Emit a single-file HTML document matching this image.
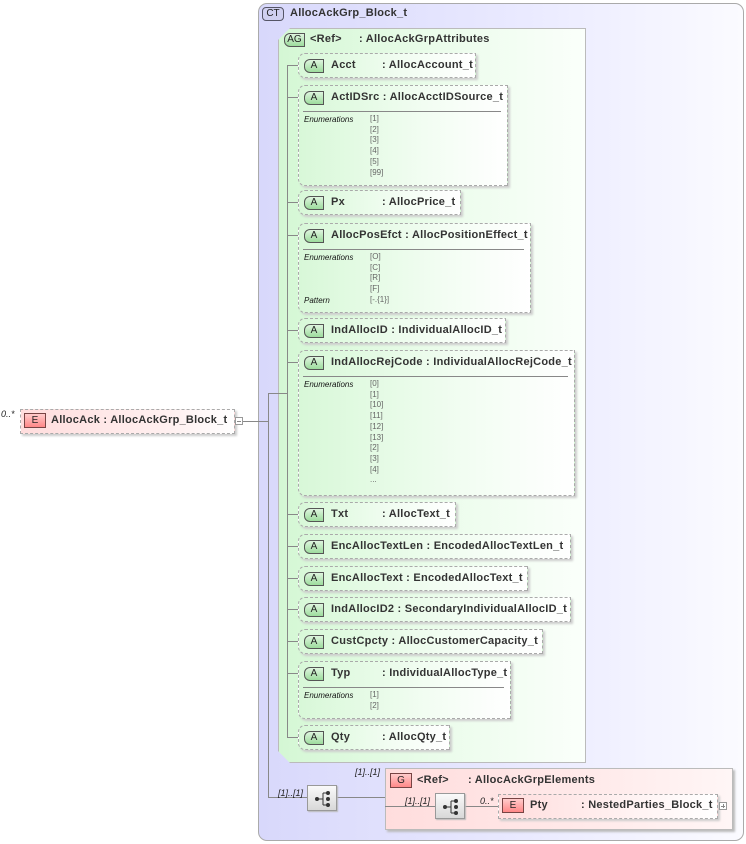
<!DOCTYPE html>
<html><head><meta charset="utf-8">
<style>
*{margin:0;padding:0;box-sizing:border-box}
body{width:746px;height:844px;background:#fff;position:relative;overflow:hidden;font-family:"Liberation Sans",Arial,sans-serif;font-size:11px;color:#222}
.a{position:absolute}
.ct{left:258px;top:3px;width:486px;height:838px;border:1px solid #aaa;border-radius:9px;background:linear-gradient(90deg,#d8d8fb 0%,#eaeaff 55%,#fbfbff 100%)}
.ag{left:278px;top:28px;width:308px;height:735px;border:1px solid #bbb;background:linear-gradient(90deg,#d4f7d4 0%,#eafcea 50%,#fbfffb 100%);box-shadow:2px 2px 2px #bbb;clip-path:polygon(12px 0,100% 0,100% 100%,12px 100%,0 calc(100% - 12px),0 12px)}
.box{position:absolute;border:1px dashed #aaa;background:linear-gradient(90deg,#d8f8d8 0%,#f2fdf2 60%,#fff 100%);box-shadow:2px 2px 2px #ccc;border-radius:7px 0 0 7px}
.b{font-weight:bold;font-size:11px;white-space:nowrap;letter-spacing:0.25px;color:#333}
.badge{position:absolute;left:5px;top:5px;width:20px;height:14px;border:1px solid #555;border-radius:6px 0 0 6px;background:linear-gradient(#dff5df,#9ddc9d);font-size:10px;text-align:center;line-height:12px;color:#222}
.hd{position:absolute;left:32px;top:5px}
.sep{position:absolute;left:4px;right:6px;height:1px;background:#888}
.en{position:absolute;font-size:8px;font-style:italic;color:#111}
.v{position:absolute;font-size:8px;color:#666;line-height:10.7px}
.ln{position:absolute;background:#888}
.i{font-style:italic;font-size:9px;position:absolute;white-space:nowrap}
.seq{position:absolute;width:30px;height:26px;border:1px solid #999;background:linear-gradient(#fafafa,#d8d8d8);box-shadow:1px 1px 1px #bbb}
</style></head><body>

<div class="a ct"></div>
<div class="a" style="left:262px;top:7px;width:22px;height:14px;border:1px solid #556;border-radius:4px;background:#d0d0f0;font-size:10px;text-align:center;line-height:12px">CT</div>
<div class="a b" style="left:290px;top:7px">AllocAckGrp_Block_t</div>

<div class="a ag"></div>
<div class="a" style="left:284px;top:33px;width:21px;height:14px;border:1px solid #555;border-radius:6px 0 0 6px;background:linear-gradient(#dff5df,#9ddc9d);font-size:10px;text-align:center;line-height:12px">AG</div>
<div class="a b" style="left:310px;top:33px">&lt;Ref&gt;</div>
<div class="a b" style="left:359px;top:33px">: AllocAckGrpAttributes</div>

<div class="ln" style="left:287px;top:65px;width:1px;height:673px"></div>
<div class="ln" style="left:268px;top:393px;width:20px;height:1px"></div>
<div class="ln" style="left:268px;top:393px;width:1px;height:405px"></div>
<div class="ln" style="left:240px;top:421px;width:29px;height:1px"></div>
<div class="ln" style="left:268px;top:797px;width:40px;height:1px"></div>
<div class="ln" style="left:337px;top:797px;width:48px;height:1px"></div>

<div class="box" style="left:298px;top:53px;width:178px;height:25px"><div class="badge">A</div><div class="hd b">Acct</div><div class="hd b" style="left:83px">: AllocAccount_t</div></div>
<div class="ln" style="left:287px;top:65px;width:11px;height:1px"></div>

<div class="box" style="left:298px;top:85px;width:210px;height:101px"><div class="badge">A</div><div class="hd b">ActIDSrc : AllocAcctIDSource_t</div>
<div class="sep" style="top:25px"></div><div class="en" style="left:5px;top:29px">Enumerations</div><div class="v" style="left:71px;top:28px">[1]<br>[2]<br>[3]<br>[4]<br>[5]<br>[99]</div></div>
<div class="ln" style="left:287px;top:97px;width:11px;height:1px"></div>

<div class="box" style="left:298px;top:190px;width:163px;height:25px"><div class="badge">A</div><div class="hd b">Px</div><div class="hd b" style="left:83px">: AllocPrice_t</div></div>
<div class="ln" style="left:287px;top:202px;width:11px;height:1px"></div>

<div class="box" style="left:298px;top:223px;width:233px;height:90px"><div class="badge">A</div><div class="hd b">AllocPosEfct : AllocPositionEffect_t</div>
<div class="sep" style="top:25px"></div><div class="en" style="left:5px;top:29px">Enumerations</div><div class="v" style="left:71px;top:28px">[O]<br>[C]<br>[R]<br>[F]<br>[-.{1}]</div><div class="en" style="left:5px;top:72px">Pattern</div></div>
<div class="ln" style="left:287px;top:235px;width:11px;height:1px"></div>

<div class="box" style="left:298px;top:318px;width:208px;height:25px"><div class="badge">A</div><div class="hd b">IndAllocID : IndividualAllocID_t</div></div>
<div class="ln" style="left:287px;top:330px;width:11px;height:1px"></div>

<div class="box" style="left:298px;top:350px;width:277px;height:146px"><div class="badge">A</div><div class="hd b">IndAllocRejCode : IndividualAllocRejCode_t</div>
<div class="sep" style="top:25px"></div><div class="en" style="left:5px;top:29px">Enumerations</div><div class="v" style="left:71px;top:28px">[0]<br>[1]<br>[10]<br>[11]<br>[12]<br>[13]<br>[2]<br>[3]<br>[4]<br>...</div></div>
<div class="ln" style="left:287px;top:362px;width:11px;height:1px"></div>

<div class="box" style="left:298px;top:502px;width:158px;height:25px"><div class="badge">A</div><div class="hd b">Txt</div><div class="hd b" style="left:83px">: AllocText_t</div></div>
<div class="ln" style="left:287px;top:514px;width:11px;height:1px"></div>

<div class="box" style="left:298px;top:534px;width:273px;height:25px"><div class="badge">A</div><div class="hd b">EncAllocTextLen : EncodedAllocTextLen_t</div></div>
<div class="ln" style="left:287px;top:546px;width:11px;height:1px"></div>

<div class="box" style="left:298px;top:566px;width:230px;height:25px"><div class="badge">A</div><div class="hd b">EncAllocText : EncodedAllocText_t</div></div>
<div class="ln" style="left:287px;top:578px;width:11px;height:1px"></div>

<div class="box" style="left:298px;top:597px;width:273px;height:25px"><div class="badge">A</div><div class="hd b">IndAllocID2 : SecondaryIndividualAllocID_t</div></div>
<div class="ln" style="left:287px;top:609px;width:11px;height:1px"></div>

<div class="box" style="left:298px;top:629px;width:245px;height:25px"><div class="badge">A</div><div class="hd b">CustCpcty : AllocCustomerCapacity_t</div></div>
<div class="ln" style="left:287px;top:641px;width:11px;height:1px"></div>

<div class="box" style="left:298px;top:661px;width:213px;height:58px"><div class="badge">A</div><div class="hd b">Typ</div><div class="hd b" style="left:83px">: IndividualAllocType_t</div>
<div class="sep" style="top:25px"></div><div class="en" style="left:5px;top:29px">Enumerations</div><div class="v" style="left:71px;top:28px">[1]<br>[2]</div></div>
<div class="ln" style="left:287px;top:673px;width:11px;height:1px"></div>

<div class="box" style="left:298px;top:725px;width:152px;height:25px"><div class="badge">A</div><div class="hd b">Qty</div><div class="hd b" style="left:83px">: AllocQty_t</div></div>
<div class="ln" style="left:287px;top:737px;width:11px;height:1px"></div>

<div class="i" style="left:1px;top:409px">0..*</div>
<div class="a" style="left:20px;top:409px;width:215px;height:25px;border:1px dashed #aaa;background:linear-gradient(90deg,#fdd 0%,#fff0f0 70%,#fff 100%);box-shadow:2px 2px 2px #ccc"></div>
<div class="a" style="left:24px;top:413px;width:22px;height:15px;border:1px solid #744;background:linear-gradient(#fcc,#f88);font-size:10px;text-align:center;line-height:13px">E</div>
<div class="a b" style="left:51px;top:414px">AllocAck : AllocAckGrp_Block_t</div>
<div class="a" style="left:235px;top:417px;width:8px;height:8px;border:1px solid #999;background:#fff"><div style="position:absolute;left:1px;top:3px;width:4px;height:1px;background:#888"></div></div>

<div class="i" style="left:278px;top:788px">[1]..[1]</div>
<div class="seq" style="left:307px;top:785px"><svg width="30" height="26" viewBox="0 0 30 26"><circle cx="9" cy="13" r="2" fill="#333"/><line x1="9" y1="13" x2="15" y2="13" stroke="#333"/><line x1="15" y1="7" x2="15" y2="19" stroke="#333"/><line x1="15" y1="7" x2="20" y2="7" stroke="#333"/><line x1="15" y1="19" x2="20" y2="19" stroke="#333"/><circle cx="20" cy="7" r="2" fill="#333"/><circle cx="20" cy="13" r="2" fill="#333"/><circle cx="20" cy="19" r="2" fill="#333"/></svg></div>

<div class="i" style="left:355px;top:767px">[1]..[1]</div>
<div class="a" style="left:385px;top:768px;width:348px;height:62px;border:1px solid #bbb;background:linear-gradient(90deg,#fdd 0%,#ffeaea 60%,#fff6f6 100%);box-shadow:2px 2px 2px #bbb"></div>
<div class="a" style="left:390px;top:773px;width:22px;height:15px;border:1px solid #744;background:linear-gradient(#fcc,#f88);font-size:10px;text-align:center;line-height:13px">G</div>
<div class="a b" style="left:417px;top:774px">&lt;Ref&gt;</div>
<div class="a b" style="left:468px;top:774px">: AllocAckGrpElements</div>
<div class="ln" style="left:385px;top:806px;width:50px;height:1px"></div>
<div class="ln" style="left:465px;top:806px;width:33px;height:1px"></div>
<div class="i" style="left:405px;top:796px">[1]..[1]</div>
<div class="seq" style="left:435px;top:793px"><svg width="30" height="26" viewBox="0 0 30 26"><circle cx="9" cy="13" r="2" fill="#333"/><line x1="9" y1="13" x2="15" y2="13" stroke="#333"/><line x1="15" y1="7" x2="15" y2="19" stroke="#333"/><line x1="15" y1="7" x2="20" y2="7" stroke="#333"/><line x1="15" y1="19" x2="20" y2="19" stroke="#333"/><circle cx="20" cy="7" r="2" fill="#333"/><circle cx="20" cy="13" r="2" fill="#333"/><circle cx="20" cy="19" r="2" fill="#333"/></svg></div>
<div class="i" style="left:480px;top:796px">0..*</div>
<div class="a" style="left:498px;top:794px;width:220px;height:25px;border:1px dashed #aaa;background:linear-gradient(90deg,#fdd 0%,#fff2f2 60%,#fff 100%);box-shadow:2px 2px 2px #ccc"></div>
<div class="a" style="left:502px;top:798px;width:22px;height:15px;border:1px solid #744;background:linear-gradient(#fcc,#f88);font-size:10px;text-align:center;line-height:13px">E</div>
<div class="a b" style="left:530px;top:799px">Pty</div>
<div class="a b" style="left:581px;top:799px">: NestedParties_Block_t</div>
<div class="a" style="left:719px;top:802px;width:8px;height:8px;border:1px solid #999;background:#fff"><div style="position:absolute;left:1px;top:3px;width:4px;height:1px;background:#888"></div><div style="position:absolute;left:3px;top:1px;width:1px;height:4px;background:#888"></div></div>

</body></html>
